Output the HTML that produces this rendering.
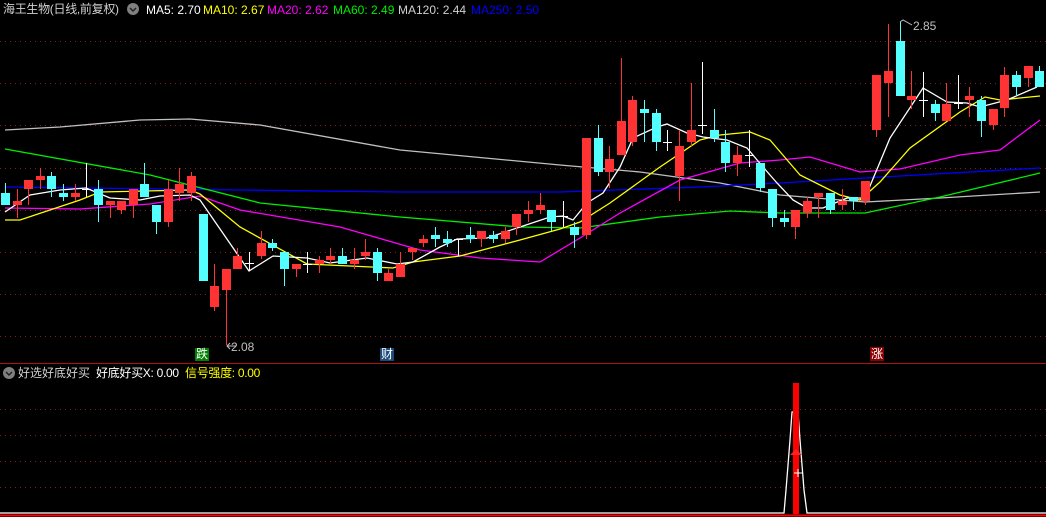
<!DOCTYPE html>
<html><head><meta charset="utf-8"><style>
html,body{margin:0;padding:0;background:#000;}
body{width:1046px;height:517px;overflow:hidden;position:relative;font-family:"Liberation Sans","Noto Sans CJK SC",sans-serif;font-size:12px;}
.t{position:absolute;white-space:nowrap;line-height:14px;font-size:12px;}
</style></head><body>
<svg id="s" width="1046" height="517" style="position:absolute;left:0;top:0" xmlns="http://www.w3.org/2000/svg">
<g stroke="#8b1a1a" stroke-dasharray="1,4" stroke-width="1">
<line x1="0" y1="41.5" x2="1046" y2="41.5"/><line x1="0" y1="83.5" x2="1046" y2="83.5"/><line x1="0" y1="125.5" x2="1046" y2="125.5"/><line x1="0" y1="168.5" x2="1046" y2="168.5"/><line x1="0" y1="210.5" x2="1046" y2="210.5"/><line x1="0" y1="252.5" x2="1046" y2="252.5"/><line x1="0" y1="294.5" x2="1046" y2="294.5"/><line x1="0" y1="336.5" x2="1046" y2="336.5"/>
<line x1="0" y1="409.5" x2="1046" y2="409.5"/><line x1="0" y1="435.5" x2="1046" y2="435.5"/><line x1="0" y1="461.5" x2="1046" y2="461.5"/><line x1="0" y1="487.5" x2="1046" y2="487.5"/>
</g>
<line x1="0" y1="363.5" x2="1046" y2="363.5" stroke="#b01010"/>
<g fill="none" stroke-width="1.3">
<polyline stroke="#c0c0c0" points="5,130 60,127 140,120 190,119 260,125 400,150 560,165 640,172 720,183 780,195 865,202 940,198 1040,192"/>
<polyline stroke="#0000ff" points="5,187 240,190 400,192 560,192 700,187 780,183 900,176 1040,168"/>
<polyline stroke="#00ee00" points="5,149 150,175 260,203 400,217 520,227 580,228 660,217 730,211 780,213 865,213 940,197 1040,173"/>
<polyline stroke="#ff00ff" points="5,208 80,209 150,204 200,196 240,210 340,227 420,250 480,258 540,262 580,238 620,213 680,180 740,163 780,160 810,157 860,172 900,169 960,155 1000,150 1040,120"/>
<polyline stroke="#ffff00" points="5,220 20,220 80,200 100,192 190,190 200,194 240,227 307,264 393,268 413,262 460,256 520,240 560,229 580,222 610,203 660,167 700,140 720,135 750,132 770,140 800,175 840,195 860,200 880,182 910,148 960,112 985,97 1000,100 1040,96"/>
<polyline stroke="#ffffff" points="5,212 30,195 60,190 86,188 110,198 140,200 160,196 190,195 200,200 249,271 273,256 307,258 330,263 367,258 397,264 413,262 440,247 457,239 487,238 523,226 550,217 563,216 573,220 587,203 603,193 620,167 633,138 657,127 667,124 687,133 703,137 727,140 747,148 763,167 777,183 793,200 807,208 823,208 847,198 865,198 890,138 923,88 947,102 967,103 980,107 1007,100 1037,87"/>
</g>
<g id="c"></g>
<text x="231" y="351" fill="#c0c0c0" font-size="12" font-family="Liberation Sans,sans-serif">2.08</text>
<text x="913" y="30" fill="#c0c0c0" font-size="12" font-family="Liberation Sans,sans-serif">2.85</text>
<polyline points="236,346 227,346" stroke="#c0c0c0" fill="none"/><polyline points="230,343 227,346 230,349" stroke="#c0c0c0" fill="none"/>
<polyline points="900,22 903,20 912,25" stroke="#c0c0c0" fill="none"/>
<rect x="195" y="348" width="14" height="13" fill="#008000"/>
<rect x="380" y="348" width="14" height="13" fill="#1c4a7a"/>
<rect x="870" y="347" width="14" height="14" fill="#8b0000"/>
<polyline fill="none" stroke="#fff" stroke-width="1.3" points="0,513 784,513 786,490 788,465 790,440 792,412 794,412 798,412 800,440 802,465 804,490 807,513 1046,513"/>
<rect x="793" y="383" width="6" height="131" fill="#ff0000"/>
<path d="M790,455 L796,449 L802,455 Z" fill="#ff2020"/>
<line x1="794" y1="473" x2="802" y2="473" stroke="#fff"/><line x1="798" y1="469" x2="798" y2="477" stroke="#fff"/>
<line x1="0" y1="515.5" x2="1046" y2="515.5" stroke="#ff0000" stroke-width="2"/>
<circle cx="133" cy="9" r="6" fill="#808080"/><path d="M130,8 L133,11 L136,8" stroke="#222" fill="none" stroke-width="1.5"/>
<circle cx="9" cy="373" r="6" fill="#808080"/><path d="M6,372 L9,375 L12,372" stroke="#222" fill="none" stroke-width="1.5"/>
</svg>
<div class="t" style="left:3px;top:2px;color:#d0d0d0;letter-spacing:-0.3px">海王生物(日线,前复权)</div>
<div class="t" style="left:146px;top:3px;color:#fff">MA5: 2.70</div>
<div class="t" style="left:203px;top:3px;color:#ffff00">MA10: 2.67</div>
<div class="t" style="left:267px;top:3px;color:#ff00ff">MA20: 2.62</div>
<div class="t" style="left:333px;top:3px;color:#00ee00">MA60: 2.49</div>
<div class="t" style="left:398px;top:3px;color:#d0d0d0">MA120: 2.44</div>
<div class="t" style="left:471px;top:3px;color:#0000ff">MA250: 2.50</div>
<div class="t" style="left:18px;top:366px;color:#d0d0d0">好选好底好买</div>
<div class="t" style="left:96px;top:366px;color:#fff;letter-spacing:-0.3px">好底好买X: 0.00</div>
<div class="t" style="left:185px;top:366px;color:#ffff00;letter-spacing:-0.3px">信号强度: 0.00</div>
<div class="t" style="left:196px;top:347px;color:#fff">跌</div>
<div class="t" style="left:381px;top:347px;color:#fff">财</div>
<div class="t" style="left:871px;top:347px;color:#fff">涨</div>
<script>
var d=[
"c,193,205,183,205","r,201,205,189,218","r,180,189,180,205","r,176,180,168,189","c,176,189,172,197","c,193,197,184,201","r,193,197,184,201","w,189,189,163,197","c,189,205,180,222","r,201,205,201,218","r,201,210,201,214","r,189,205,189,218","c,184,197,163,197","c,205,222,205,234","r,189,222,180,227","r,184,193,168,201","r,176,193,172,201","c,214,281,214,281","r,286,307,264,311","r,269,290,269,345","r,256,269,248,269","w,263,263,252,270","r,243,256,231,259","c,243,248,239,251","c,252,269,252,286","r,264,269,264,277","w,264,264,252,273","r,260,264,256,273","r,256,260,248,264","c,256,264,248,264","r,260,264,248,269","r,252,256,239,260","c,252,273,248,281","r,273,281,269,281","r,264,277,252,277","r,248,252,248,260","r,239,243,235,247","c,235,239,227,247","c,239,243,231,247","w,239,239,239,256","c,235,239,227,243","r,231,239,231,247","c,235,239,231,243","r,231,239,227,243","r,214,227,214,235","r,210,214,201,222","r,205,210,193,214","c,210,222,210,231","w,216,216,201,227","c,227,235,222,248","r,138,235,138,239","c,138,172,125,176","r,159,172,146,188","r,121,155,58,155","r,100,142,96,146","c,109,113,100,142","c,113,142,109,151","w,142,142,130,151","r,146,176,130,201","r,130,142,83,146","w,125,125,62,134","c,130,138,109,142","c,142,163,130,172","r,155,163,146,176","w,155,155,130,167","c,163,188,163,192","c,189,218,189,227","c,218,222,210,227","r,210,227,210,239","r,201,213,197,218","r,193,197,193,218","c,193,210,193,214","r,201,205,189,210","c,197,201,197,210","r,181,201,181,205","r,75,130,75,137","r,71,83,24,117","c,41,96,22,96","r,96,100,71,109","w,100,100,72,117","c,104,113,100,121","r,104,121,83,121","w,103,103,75,109","r,96,100,87,117","c,100,121,96,137","r,109,125,109,130","r,75,108,67,117","c,75,87,71,96","r,66,78,66,87","c,71,87,66,87"];
var g=document.getElementById('c'),h='';
for(var i=0;i<d.length;i++){var p=d[i].split(','),x=Math.round(5+i*11.62),t=+p[1],b=+p[2],hi=+p[3],lo=+p[4];
var col=p[0]=='r'?'#ff3333':p[0]=='c'?'#54ffff':'#ffffff';
h+='<line x1="'+(x+.5)+'" y1="'+hi+'" x2="'+(x+.5)+'" y2="'+lo+'" stroke="'+col+'"/>';
if(p[0]=='w')h+='<line x1="'+(x-4)+'" y1="'+(t+.5)+'" x2="'+(x+5)+'" y2="'+(t+.5)+'" stroke="#fff"/>';
else h+='<rect x="'+(x-4)+'" y="'+t+'" width="9" height="'+Math.max(1,b-t)+'" fill="'+col+'"/>';}
g.innerHTML=h;
</script>
</body></html>
